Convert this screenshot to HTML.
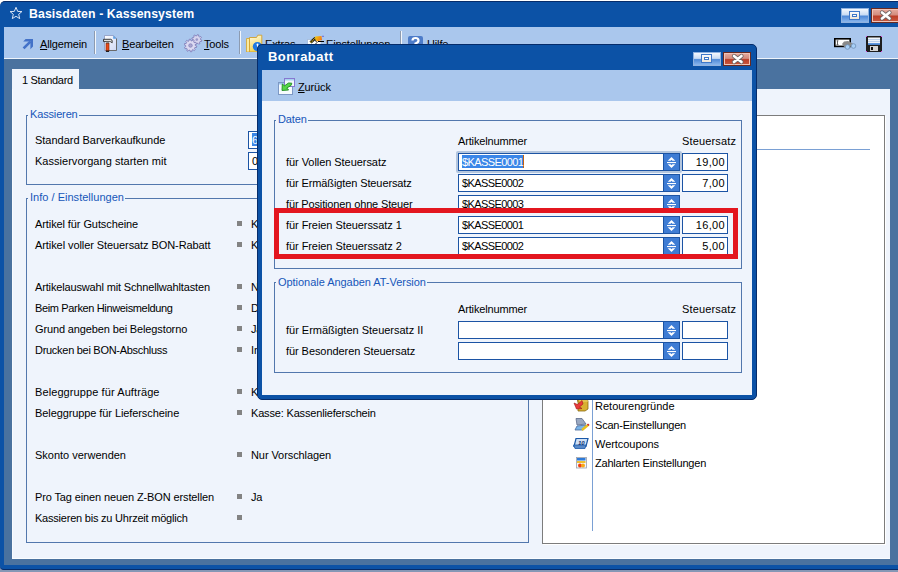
<!DOCTYPE html>
<html><head><meta charset="utf-8">
<style>
*{margin:0;padding:0;box-sizing:border-box}
html,body{width:898px;height:572px;overflow:hidden;background:#ffffff;font-family:"Liberation Sans",sans-serif;font-size:11px;color:#000}
.a{position:absolute}
.t{position:absolute;white-space:nowrap;line-height:13px;top:0;letter-spacing:-0.15px}
.k{letter-spacing:-0.6px}
.g{color:#1656b9}
.b{position:absolute;width:5px;height:5px;background:#838383}
.u{text-decoration:underline}
</style></head><body>
<!-- main window -->
<div class="a" style="left:0;top:556px;width:898px;height:16px;background:#8597b5"></div>
<div class="a" style="left:0;top:1px;width:898px;height:569px;background:#0c52a6;border-top:1px solid #062c6a;border-bottom:1px solid #062c6a;border-radius:5px 0 0 4px"></div>
<div class="t" style="left:29px;top:5px;color:#fff;font-weight:bold;font-size:12.3px;line-height:18px;letter-spacing:0.1px">Basisdaten - Kassensystem</div>
<!-- toolbar -->
<div class="a" style="left:4px;top:27px;width:894px;height:31px;background:#aac7ed"></div>
<div class="a" style="left:4px;top:58px;width:894px;height:1px;background:#eef4fb"></div>

<!-- toolbar items -->
<svg class="a" style="left:18px;top:34px" width="20" height="20" viewBox="0 0 20 20"><path d="M5.2 7.6 L7.6 5 L15 5 L15 12.6 L12.4 15.2 L12.4 7.6 Z" fill="#4372c8"/><path d="M5.6 14.4 L12.4 7.6" stroke="#4372c8" stroke-width="2.7"/></svg>
<div class="t" style="left:40px;top:38px"><span class="u">A</span>llgemein</div>
<div class="a" style="left:94px;top:31px;width:1px;height:23px;background:#8d9bb0"></div>
<div class="a" style="left:95px;top:31px;width:1px;height:23px;background:#f3f7fc"></div>
<svg class="a" style="left:100px;top:32px" width="20" height="22" viewBox="0 0 20 22"><defs><linearGradient id="dg" x1="0" y1="0" x2="1" y2="1"><stop offset="0" stop-color="#ffffff"/><stop offset="1" stop-color="#cfd8f4"/></linearGradient></defs><path d="M4.5 3.5 H13.5 L16.5 6.5 V18.5 H4.5 Z" fill="url(#dg)" stroke="#8a98c0" stroke-width="0.8"/><path d="M16.5 6.5 V18.5 H6" stroke="#6a6a6a" stroke-width="1" fill="none"/><path d="M13.2 3.5 L16.5 6.8 H13.2 Z" fill="#5aa0e8"/><path d="M3.5 7.3 H10.8 Q12.6 7.3 12.2 10.8 L11.2 10.2 Q11 9.6 9.6 9.6 H3.5 Z" fill="#e2e2e2" stroke="#2a2a2a" stroke-width="0.9"/><rect x="6.2" y="9.6" width="2.8" height="2" fill="#8a8a8a"/><rect x="6" y="11.5" width="3" height="7.5" fill="#e84a1a" stroke="#7a2000" stroke-width="0.6"/><rect x="6" y="18.5" width="3" height="1.5" fill="#1e1e1e"/></svg>
<div class="t" style="left:122px;top:38px"><span class="u">B</span>earbeiten</div>
<svg class="a" style="left:184px;top:34px" width="20" height="19" viewBox="0 0 20 19"><path d="M16.60 5.60 L17.77 6.19 L17.42 7.51 L16.12 7.46 L15.49 8.29 L15.90 9.53 L14.71 10.22 L13.83 9.26 L12.80 9.40 L12.21 10.57 L10.89 10.22 L10.94 8.92 L10.11 8.29 L8.87 8.70 L8.18 7.51 L9.14 6.63 L9.00 5.60 L7.83 5.01 L8.18 3.69 L9.48 3.74 L10.11 2.91 L9.70 1.67 L10.89 0.98 L11.77 1.94 L12.80 1.80 L13.39 0.63 L14.71 0.98 L14.66 2.28 L15.49 2.91 L16.73 2.50 L17.42 3.69 L16.46 4.57 Z" fill="#d6d4ee" stroke="#7a76b4" stroke-width="0.8"/><circle cx="12.8" cy="5.6" r="1.3" fill="#9a98c8"/><path d="M11.30 11.50 L12.77 12.09 L12.49 13.45 L10.91 13.41 L10.38 14.32 L11.23 15.67 L10.20 16.60 L8.94 15.63 L7.98 16.07 L7.87 17.65 L6.50 17.80 L6.05 16.28 L5.02 16.07 L4.00 17.28 L2.80 16.60 L3.33 15.10 L2.62 14.32 L1.08 14.71 L0.51 13.45 L1.82 12.55 L1.70 11.50 L0.23 10.91 L0.51 9.55 L2.09 9.59 L2.62 8.68 L1.77 7.33 L2.80 6.40 L4.06 7.37 L5.02 6.93 L5.13 5.35 L6.50 5.20 L6.95 6.72 L7.98 6.93 L9.00 5.72 L10.20 6.40 L9.67 7.90 L10.38 8.68 L11.92 8.29 L12.49 9.55 L11.18 10.45 Z" fill="#dcdaf2" stroke="#7a76b4" stroke-width="0.8"/><circle cx="6.5" cy="11.5" r="1.8" fill="#a8a6d0" stroke="#7a76b4" stroke-width="0.6"/></svg>
<div class="t" style="left:204px;top:38px"><span class="u">T</span>ools</div>
<div class="a" style="left:239px;top:31px;width:1px;height:23px;background:#8d9bb0"></div>
<div class="a" style="left:240px;top:31px;width:1px;height:23px;background:#f3f7fc"></div>
<svg class="a" style="left:242px;top:30px" width="24" height="22" viewBox="0 0 24 22"><defs><linearGradient id="fg" x1="0" y1="0" x2="0.3" y2="1"><stop offset="0" stop-color="#fffce8"/><stop offset="1" stop-color="#f4d450"/></linearGradient></defs><path d="M4.5 8.5 H8 V22 H4.5 Z" fill="#faeaa0" stroke="#d2aa3c" stroke-width="0.9"/><path d="M7.5 7.5 H14.5 L15.8 5.2 H19.8 V22 H7.5 Z" fill="url(#fg)" stroke="#d0a030" stroke-width="0.9"/><circle cx="15.4" cy="16.6" r="4.6" fill="#1f78e2"/><path d="M14.5 14 Q15.5 13 16.5 14 L15.6 18 Z" fill="#fff"/></svg>
<div class="t" style="left:265px;top:38px">E<span>xtras</span></div>
<svg class="a" style="left:300px;top:30px" width="30" height="16" viewBox="0 0 30 16"><defs><linearGradient id="og" x1="0" y1="0" x2="1" y2="0.4"><stop offset="0" stop-color="#f4d010"/><stop offset="1" stop-color="#f07a18"/></linearGradient></defs><rect x="7.5" y="9.5" width="13.5" height="8" fill="#fff" stroke="#a8bedc" stroke-width="0.9"/><path d="M10.5 12.5 L15.5 8" stroke="#111" stroke-width="3"/><path d="M10.5 12.5 L15.5 8" stroke="#f2c818" stroke-width="1.4" stroke-dasharray="1 0.8"/><path d="M15 6.5 L21.5 6 L22 10 L17 11.5 L15.5 10 Z" fill="url(#og)"/><path d="M14 9 L17 12.5 L15.5 14" stroke="#222" stroke-width="1" fill="none"/><path d="M18 11.5 H24" stroke="#000" stroke-width="1"/><rect x="22" y="5.8" width="2" height="1" fill="#6a6ae0"/></svg>
<div class="t" style="left:326px;top:38px"><span class="u">E</span>instellungen</div>
<div class="a" style="left:400px;top:31px;width:1px;height:23px;background:#8d9bb0"></div>
<div class="a" style="left:401px;top:31px;width:1px;height:23px;background:#f3f7fc"></div>
<svg class="a" style="left:407px;top:35px" width="17" height="16" viewBox="0 0 17 16">
<rect x="1" y="1" width="15" height="14" rx="2" fill="#4d7cc9"/>
<path d="M5.5 5.5 Q5.5 3 8.5 3 Q11.5 3 11.5 5.5 Q11.5 7.5 8.5 8.5 V10" stroke="#fff" stroke-width="2.2" fill="none"/>
<rect x="7.3" y="11" width="2.4" height="2.4" fill="#fff"/>
</svg>
<div class="t" style="left:427px;top:38px"><span class="u">H</span>ilfe</div>
<!-- right toolbar icons -->
<svg class="a" style="left:833px;top:36px" width="24" height="16" viewBox="0 0 24 16"><rect x="1.8" y="2.8" width="15.4" height="7.6" fill="#fff" stroke="#000" stroke-width="1.6"/><path d="M4.5 4.8 V8.6 M3.6 4.8 H5.4 M3.6 8.6 H5.4" stroke="#555" stroke-width="0.9"/><path d="M9 8 L11 5.5 L15 5 L19 7 L21 9 L17 11 L12 12 Z" fill="#8a8a8a"/><circle cx="14.5" cy="11" r="2.3" fill="#a8d0f8" stroke="#7090b8" stroke-width="0.8"/><circle cx="20.5" cy="10" r="2.3" fill="#a8d0f8" stroke="#7090b8" stroke-width="0.8"/></svg>
<svg class="a" style="left:866px;top:36px" width="16" height="16" viewBox="0 0 16 16"><rect x="0" y="0" width="16" height="16" fill="#1e1e1e"/><rect x="2" y="1.5" width="12" height="7" fill="#f4f8fc"/><rect x="2" y="3.2" width="12" height="0.9" fill="#b0c8e8"/><rect x="2" y="5.2" width="12" height="0.9" fill="#b0c8e8"/><rect x="2" y="7.2" width="12" height="1.6" fill="#3d82d8"/><rect x="4" y="10" width="8" height="5" fill="#d4d4d4"/><rect x="5" y="11" width="2" height="3" fill="#111"/><rect x="0" y="0" width="1" height="1" fill="#e040e0"/><rect x="15" y="0" width="1" height="1" fill="#e040e0"/><rect x="0" y="15" width="1" height="1" fill="#e040e0"/><rect x="15" y="15" width="1" height="1" fill="#e040e0"/></svg>
<!-- title buttons -->
<div class="a" style="left:841px;top:8px;width:28px;height:15px;border:1px solid #8fb2e0;background:linear-gradient(#f4f8fd 0%,#c9dcf4 45%,#4f8ad8 55%,#8ab6ec 100%)"></div>
<div class="a" style="left:849px;top:11px;width:11px;height:9px;border:1px solid #3f78c8;background:linear-gradient(#f8fafc,#efe6d8)"></div>
<div class="a" style="left:852px;top:14px;width:5px;height:3px;border:1px solid #3f78c8;background:#fff"></div>
<div class="a" style="left:871px;top:8px;width:30px;height:15px;border:1px solid #6a2a20;background:linear-gradient(#e6aca0 0%,#d38c7e 45%,#bc3e28 55%,#cc5a40 100%);box-shadow:inset 0 0 0 1px #f0c4b8"></div>
<svg class="a" style="left:871px;top:8px" width="28" height="15" viewBox="0 0 28 15"><path d="M11 4.5 L18.5 10.5 M18.5 4.5 L11 10.5" stroke="#6e6464" stroke-width="4.2" stroke-linecap="round"/><path d="M11 4.5 L18.5 10.5 M18.5 4.5 L11 10.5" stroke="#fff" stroke-width="2.6" stroke-linecap="round"/></svg>
<!-- star -->
<svg class="a" style="left:9px;top:6px" width="15" height="15" viewBox="0 0 15 15"><path d="M7 1.3 L8.7 5.4 L12.9 5.6 L9.7 8.3 L10.7 12.6 L7 10.3 L3.3 12.6 L4.3 8.3 L1.1 5.6 L5.3 5.4 Z" fill="none" stroke="#f0f4fc" stroke-width="0.9"/></svg>

<!-- content bg -->
<div class="a" style="left:4px;top:59px;width:894px;height:506px;background:#4a729f"></div>
<!-- tab -->
<div class="a" style="left:12px;top:69px;width:67px;height:21px;background:#eff4fc"></div>
<div class="t" style="left:22px;top:74px;letter-spacing:-0.3px">1 Standard</div>
<!-- panel -->
<div class="a" style="left:12px;top:89px;width:878px;height:470px;background:#eff4fc;border-bottom:1px solid #fbfdff;border-left:1px solid #f8fbff"></div>

<!-- Kassieren group -->
<div class="a" style="left:26px;top:115px;width:540px;height:70px;border:1px solid #5277ad"></div>
<div class="t g" style="left:28px;top:108px;background:#eff4fc;padding:0 1px 0 2px">Kassieren</div>
<div class="t" style="left:35px;top:134px;letter-spacing:-0.02px">Standard Barverkaufkunde</div>
<div class="t" style="left:35px;top:155px;letter-spacing:0.026px">Kassiervorgang starten mit</div>
<div class="a" style="left:248px;top:131px;width:40px;height:18px;background:#fff;border:1px solid #1c54a4"></div>
<div class="a" style="left:252px;top:133px;width:20px;height:13px;background:#3b86e6"></div>
<div class="t" style="left:252px;top:134px;color:#fff">60001</div>
<div class="a" style="left:248px;top:152px;width:40px;height:18px;background:#fff;border:1px solid #1c54a4"></div>
<div class="t" style="left:252px;top:155px">0</div>

<!-- Info group -->
<div class="a" style="left:26px;top:198px;width:503px;height:345px;border:1px solid #5277ad"></div>
<div class="t g" style="left:28px;top:191px;background:#eff4fc;padding:0 1px 0 2px;letter-spacing:0.02px">Info / Einstellungen</div>
<div class="t" style="left:35px;top:218px;letter-spacing:-0.093px">Artikel für Gutscheine</div>
<div class="b" style="left:237px;top:221px"></div>
<div class="t" style="left:251px;top:218px">Kasse: Gutschein</div>
<div class="t" style="left:35px;top:239px;letter-spacing:-0.082px">Artikel voller Steuersatz BON-Rabatt</div>
<div class="b" style="left:237px;top:242px"></div>
<div class="t" style="left:251px;top:239px">Kasse: Rabatt</div>
<div class="t" style="left:35px;top:281px;letter-spacing:-0.152px">Artikelauswahl mit Schnellwahltasten</div>
<div class="b" style="left:237px;top:284px"></div>
<div class="t" style="left:251px;top:281px">Nein</div>
<div class="t" style="left:35px;top:302px;letter-spacing:-0.354px">Beim Parken Hinweismeldung</div>
<div class="b" style="left:237px;top:305px"></div>
<div class="t" style="left:251px;top:302px">Deaktiviert</div>
<div class="t" style="left:35px;top:323px;letter-spacing:-0.132px">Grund angeben bei Belegstorno</div>
<div class="b" style="left:237px;top:326px"></div>
<div class="t" style="left:251px;top:323px">Ja</div>
<div class="t" style="left:35px;top:344px;letter-spacing:-0.284px">Drucken bei BON-Abschluss</div>
<div class="b" style="left:237px;top:347px"></div>
<div class="t" style="left:251px;top:344px">Immer</div>
<div class="t" style="left:35px;top:386px;letter-spacing:0.094px">Beleggruppe für Aufträge</div>
<div class="b" style="left:237px;top:389px"></div>
<div class="t" style="left:251px;top:386px">Kasse: Kassenauftrag</div>
<div class="t" style="left:35px;top:407px;letter-spacing:-0.09px">Beleggruppe für Lieferscheine</div>
<div class="b" style="left:237px;top:410px"></div>
<div class="t" style="left:251px;top:407px;letter-spacing:-0.171px">Kasse: Kassenlieferschein</div>
<div class="t" style="left:35px;top:449px;letter-spacing:-0.01px">Skonto verwenden</div>
<div class="b" style="left:237px;top:452px"></div>
<div class="t" style="left:251px;top:449px;letter-spacing:-0.079px">Nur Vorschlagen</div>
<div class="t" style="left:35px;top:491px;letter-spacing:-0.121px">Pro Tag einen neuen Z-BON erstellen</div>
<div class="b" style="left:237px;top:494px"></div>
<div class="t" style="left:251px;top:491px">Ja</div>
<div class="t" style="left:35px;top:512px;letter-spacing:-0.218px">Kassieren bis zu Uhrzeit möglich</div>
<div class="b" style="left:237px;top:515px"></div>

<!-- right white panel -->
<div class="a" style="left:542px;top:115px;width:343px;height:429px;background:#fff;border:1px solid #7c7c7c;box-shadow:1px 1px 0 #fff"></div>
<div class="a" style="left:560px;top:149px;width:310px;height:1px;background:#7aa0d4"></div>
<div class="a" style="left:592px;top:150px;width:1px;height:381px;background:#7aa0d4"></div>

<svg class="a" style="left:572px;top:398px" width="18" height="14" viewBox="0 0 18 14">
<path d="M5 3 L8 1 H15 L16 3 V11 L13 13 H6 V3 Z" fill="#d8b030" stroke="#8a6a10" stroke-width="0.8"/>
<path d="M8 1 V3 H16" stroke="#f0d870" stroke-width="1" fill="none"/>
<path d="M10 2.5 L5.5 6.5 L2 5 L4.5 11 L10 10.5 L7.5 9 L11 6 Z" fill="#e83a3a" stroke="#a01818" stroke-width="0.6"/>
</svg>
<svg class="a" style="left:573px;top:417px" width="18" height="15" viewBox="0 0 18 15">
<path d="M3 1.5 H9 L13 7 L4 8 Z" fill="#9aa8c0" stroke="#5a6a8a" stroke-width="0.8"/>
<path d="M2 13 L4 9 L13 8 L10 13 Z" fill="#7ab4e8" stroke="#4a6a9a" stroke-width="0.8"/>
<path d="M9 13 L15 8" stroke="#e8c020" stroke-width="2.4"/>
<path d="M14.5 7 L16 8.5" stroke="#d02020" stroke-width="1.6"/>
</svg>
<svg class="a" style="left:572px;top:437px" width="18" height="13" viewBox="0 0 18 13">
<path d="M4 1.5 H16 L14 9.5 H2 Z" fill="#cfe0f4" stroke="#1a58a8" stroke-width="1.2"/>
<path d="M1.5 8 H14 L13 11.5 H3 Z" fill="#5a8ac8" stroke="#1a58a8" stroke-width="0.8"/>
<text x="6" y="7.5" font-family="Liberation Sans" font-size="6" font-weight="bold" font-style="italic" fill="#0a2a6a">10</text>
</svg>
<svg class="a" style="left:575px;top:456px" width="13" height="13" viewBox="0 0 13 13">
<rect x="1.5" y="1.5" width="10" height="10.5" fill="#f4f6fa" stroke="#9aa0aa" stroke-width="0.8"/>
<rect x="2" y="2" width="8.5" height="2.5" fill="#2e7ad8"/>
<rect x="2" y="5" width="8.5" height="2" fill="#f0c030"/>
<circle cx="5" cy="9.5" r="2" fill="#f04010"/>
<circle cx="8" cy="9.5" r="2" fill="#f8a818"/>
</svg>
<div class="t" style="left:595px;top:400px;letter-spacing:0.004px">Retourengründe</div>
<div class="t" style="left:595px;top:419px;letter-spacing:-0.209px">Scan-Einstellungen</div>
<div class="t" style="left:595px;top:438px;letter-spacing:-0.05px">Wertcoupons</div>
<div class="t" style="left:595px;top:457px;letter-spacing:-0.195px">Zahlarten Einstellungen</div>
<!-- dialog -->
<div class="a" style="left:257px;top:44px;width:500px;height:356px;background:#0c52a6;border:1px solid #062c6a;border-radius:5px"></div>
<div class="t" style="left:268px;top:49px;color:#fff;font-weight:bold;font-size:13px;line-height:16px;letter-spacing:0.45px">Bonrabatt</div>
<div class="a" style="left:693px;top:52px;width:28px;height:14px;border:1px solid #8fb2e0;background:linear-gradient(#f4f8fd 0%,#c9dcf4 45%,#4f8ad8 55%,#8ab6ec 100%)"></div>
<div class="a" style="left:701px;top:54px;width:11px;height:9px;border:1px solid #3f78c8;background:linear-gradient(#f8fafc,#efe6d8)"></div>
<div class="a" style="left:704px;top:57px;width:5px;height:3px;border:1px solid #3f78c8;background:#fff"></div>
<div class="a" style="left:723px;top:52px;width:28px;height:14px;border:1px solid #6a2a20;background:linear-gradient(#e6aca0 0%,#d38c7e 45%,#bc3e28 55%,#cc5a40 100%);box-shadow:inset 0 0 0 1px #f0c4b8"></div>
<svg class="a" style="left:723px;top:52px" width="28" height="14" viewBox="0 0 28 14"><path d="M11 4 L18.5 10 M18.5 4 L11 10" stroke="#6e6464" stroke-width="4.2" stroke-linecap="round"/><path d="M11 4 L18.5 10 M18.5 4 L11 10" stroke="#fff" stroke-width="2.6" stroke-linecap="round"/></svg>
<div class="a" style="left:262px;top:70px;width:490px;height:31px;background:#aac7ed"></div>
<svg class="a" style="left:274px;top:74px" width="24" height="24" viewBox="0 0 24 24"><rect x="4.5" y="8.5" width="14" height="12" fill="#f6fbfe" stroke="#7d98c4" stroke-width="1"/><rect x="5" y="9" width="13" height="1.5" fill="#9cc6ee"/><rect x="10.5" y="4.5" width="10" height="8" fill="#f0f7fc" stroke="#8678d0" stroke-width="1"/><rect x="11" y="5" width="9" height="1.5" fill="#a8d0f0"/><path d="M8 16.5 L8.3 10 L10.6 11.8 L14.5 9 L17.8 9.2 L17 11.5 L12.8 14 L14.6 16 Z" fill="#56d64a" stroke="#1f8a1f" stroke-width="0.9"/></svg>
<div class="t" style="left:298px;top:81px"><span class="u">Z</span>urück</div>
<div class="a" style="left:262px;top:101px;width:490px;height:294px;background:#eff4fc"></div>
<div class="a" style="left:274px;top:120px;width:468px;height:149px;border:1px solid #5277ad"></div>
<div class="t g" style="left:276px;top:113px;background:#eff4fc;padding:0 1px 0 2px">Daten</div>
<div class="t" style="left:458px;top:135px">Artikelnummer</div>
<div class="t" style="left:682px;top:135px;letter-spacing:0.15px">Steuersatz</div>
<div class="t" style="left:286px;top:156px;letter-spacing:-0.055px">für Vollen Steuersatz</div>
<div class="a" style="left:456px;top:151px;width:226px;height:22px;background:#b4c6de;border-radius:2px"></div>
<div class="a" style="left:458px;top:153px;width:222px;height:18px;background:#fff;border:1px solid #1c54a4"></div>
<div class="a" style="left:663px;top:153px;width:17px;height:18px;background:#3e7cd4;border:1px solid #1c54a4"></div>
<svg class="a" style="left:660px;top:153px" width="20" height="18" viewBox="0 0 20 18"><path d="M11.5 4 L15.3 7.8 L12.4 7.8 L11.5 6.8 L10.6 7.8 L7.7 7.8 Z" fill="#fff"/><rect x="7" y="9" width="9" height="1.1" fill="#fff"/><path d="M11.5 15 L15.3 11.2 L12.4 11.2 L11.5 12.2 L10.6 11.2 L7.7 11.2 Z" fill="#fff"/></svg>
<div class="a" style="left:462px;top:155px;width:61px;height:13px;background:#3a86e8"></div>
<div class="a" style="left:523px;top:155px;width:1px;height:13px;background:#c06010"></div>
<div class="t k" style="left:462px;top:156px;color:#fff">$KASSE0001</div>
<div class="a" style="left:682px;top:153px;width:46px;height:18px;background:#fff;border:1px solid #1c54a4"></div>
<div class="t" style="left:682px;top:156px;width:43px;text-align:right;letter-spacing:0.35px">19,00</div>
<div class="t" style="left:286px;top:177px;letter-spacing:-0.108px">für Ermäßigten Steuersatz</div>
<div class="a" style="left:458px;top:174px;width:222px;height:18px;background:#fff;border:1px solid #1c54a4"></div>
<div class="a" style="left:663px;top:174px;width:17px;height:18px;background:#3e7cd4;border:1px solid #1c54a4"></div>
<svg class="a" style="left:660px;top:174px" width="20" height="18" viewBox="0 0 20 18"><path d="M11.5 4 L15.3 7.8 L12.4 7.8 L11.5 6.8 L10.6 7.8 L7.7 7.8 Z" fill="#fff"/><rect x="7" y="9" width="9" height="1.1" fill="#fff"/><path d="M11.5 15 L15.3 11.2 L12.4 11.2 L11.5 12.2 L10.6 11.2 L7.7 11.2 Z" fill="#fff"/></svg>
<div class="t k" style="left:462px;top:177px">$KASSE0002</div>
<div class="a" style="left:682px;top:174px;width:46px;height:18px;background:#fff;border:1px solid #1c54a4"></div>
<div class="t" style="left:682px;top:177px;width:43px;text-align:right;letter-spacing:0.35px">7,00</div>
<div class="t" style="left:286px;top:198px;letter-spacing:-0.142px">für Positionen ohne Steuer</div>
<div class="a" style="left:458px;top:195px;width:222px;height:18px;background:#fff;border:1px solid #1c54a4"></div>
<div class="a" style="left:663px;top:195px;width:17px;height:18px;background:#3e7cd4;border:1px solid #1c54a4"></div>
<svg class="a" style="left:660px;top:195px" width="20" height="18" viewBox="0 0 20 18"><path d="M11.5 4 L15.3 7.8 L12.4 7.8 L11.5 6.8 L10.6 7.8 L7.7 7.8 Z" fill="#fff"/><rect x="7" y="9" width="9" height="1.1" fill="#fff"/><path d="M11.5 15 L15.3 11.2 L12.4 11.2 L11.5 12.2 L10.6 11.2 L7.7 11.2 Z" fill="#fff"/></svg>
<div class="t k" style="left:462px;top:198px">$KASSE0003</div>
<div class="t" style="left:286px;top:219px;letter-spacing:-0.067px">für Freien Steuerssatz 1</div>
<div class="a" style="left:458px;top:216px;width:222px;height:18px;background:#fff;border:1px solid #1c54a4"></div>
<div class="a" style="left:663px;top:216px;width:17px;height:18px;background:#3e7cd4;border:1px solid #1c54a4"></div>
<svg class="a" style="left:660px;top:216px" width="20" height="18" viewBox="0 0 20 18"><path d="M11.5 4 L15.3 7.8 L12.4 7.8 L11.5 6.8 L10.6 7.8 L7.7 7.8 Z" fill="#fff"/><rect x="7" y="9" width="9" height="1.1" fill="#fff"/><path d="M11.5 15 L15.3 11.2 L12.4 11.2 L11.5 12.2 L10.6 11.2 L7.7 11.2 Z" fill="#fff"/></svg>
<div class="t k" style="left:462px;top:219px">$KASSE0001</div>
<div class="a" style="left:682px;top:216px;width:46px;height:18px;background:#fff;border:1px solid #1c54a4"></div>
<div class="t" style="left:682px;top:219px;width:43px;text-align:right;letter-spacing:0.35px">16,00</div>
<div class="t" style="left:286px;top:240px;letter-spacing:-0.067px">für Freien Steuerssatz 2</div>
<div class="a" style="left:458px;top:237px;width:222px;height:18px;background:#fff;border:1px solid #1c54a4"></div>
<div class="a" style="left:663px;top:237px;width:17px;height:18px;background:#3e7cd4;border:1px solid #1c54a4"></div>
<svg class="a" style="left:660px;top:237px" width="20" height="18" viewBox="0 0 20 18"><path d="M11.5 4 L15.3 7.8 L12.4 7.8 L11.5 6.8 L10.6 7.8 L7.7 7.8 Z" fill="#fff"/><rect x="7" y="9" width="9" height="1.1" fill="#fff"/><path d="M11.5 15 L15.3 11.2 L12.4 11.2 L11.5 12.2 L10.6 11.2 L7.7 11.2 Z" fill="#fff"/></svg>
<div class="t k" style="left:462px;top:240px">$KASSE0002</div>
<div class="a" style="left:682px;top:237px;width:46px;height:18px;background:#fff;border:1px solid #1c54a4"></div>
<div class="t" style="left:682px;top:240px;width:43px;text-align:right;letter-spacing:0.35px">5,00</div>
<div class="a" style="left:274px;top:208px;width:464px;height:51px;border:5px solid #e3161f"></div>
<div class="a" style="left:274px;top:282px;width:468px;height:91px;border:1px solid #5277ad"></div>
<div class="t g" style="left:276px;top:276px;background:#eff4fc;padding:0 1px 0 2px;letter-spacing:-0.04px">Optionale Angaben AT-Version</div>
<div class="t" style="left:458px;top:303px">Artikelnummer</div>
<div class="t" style="left:682px;top:303px;letter-spacing:0.15px">Steuersatz</div>
<div class="t" style="left:286px;top:324px;letter-spacing:-0.01px">für Ermäßigten Steuersatz II</div>
<div class="a" style="left:458px;top:321px;width:222px;height:18px;background:#fff;border:1px solid #1c54a4"></div>
<div class="a" style="left:663px;top:321px;width:17px;height:18px;background:#3e7cd4;border:1px solid #1c54a4"></div>
<svg class="a" style="left:660px;top:321px" width="20" height="18" viewBox="0 0 20 18"><path d="M11.5 4 L15.3 7.8 L12.4 7.8 L11.5 6.8 L10.6 7.8 L7.7 7.8 Z" fill="#fff"/><rect x="7" y="9" width="9" height="1.1" fill="#fff"/><path d="M11.5 15 L15.3 11.2 L12.4 11.2 L11.5 12.2 L10.6 11.2 L7.7 11.2 Z" fill="#fff"/></svg>
<div class="a" style="left:682px;top:321px;width:46px;height:18px;background:#fff;border:1px solid #1c54a4"></div>
<div class="t" style="left:286px;top:345px;letter-spacing:-0.07px">für Besonderen Steuersatz</div>
<div class="a" style="left:458px;top:342px;width:222px;height:18px;background:#fff;border:1px solid #1c54a4"></div>
<div class="a" style="left:663px;top:342px;width:17px;height:18px;background:#3e7cd4;border:1px solid #1c54a4"></div>
<svg class="a" style="left:660px;top:342px" width="20" height="18" viewBox="0 0 20 18"><path d="M11.5 4 L15.3 7.8 L12.4 7.8 L11.5 6.8 L10.6 7.8 L7.7 7.8 Z" fill="#fff"/><rect x="7" y="9" width="9" height="1.1" fill="#fff"/><path d="M11.5 15 L15.3 11.2 L12.4 11.2 L11.5 12.2 L10.6 11.2 L7.7 11.2 Z" fill="#fff"/></svg>
<div class="a" style="left:682px;top:342px;width:46px;height:18px;background:#fff;border:1px solid #1c54a4"></div>
</body></html>
